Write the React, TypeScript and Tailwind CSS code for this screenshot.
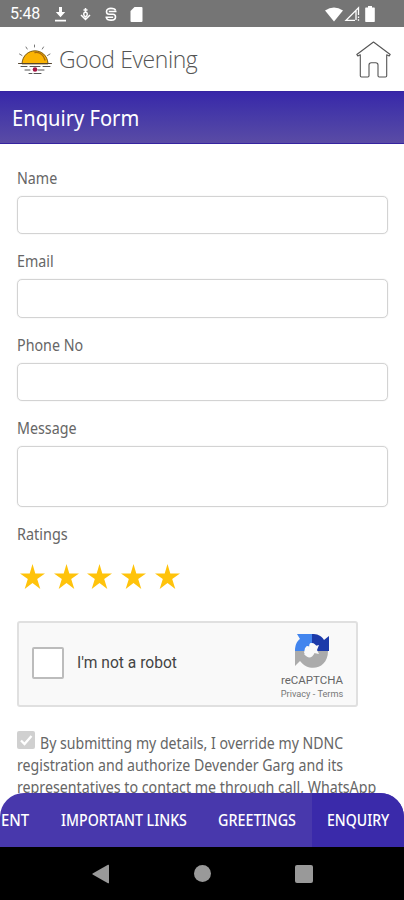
interface FieldProps {
  label: string;
  multiline?: boolean;
}

const ratings = [1, 2, 3, 4, 5];

function StatusBar() {
  return (
    <div className="flex h-[27px] shrink-0 items-center bg-[#757575] pl-[10px] pr-[29px] pt-[1px] text-white">
      <span className="w-[45px] font-['Roboto'] text-[16px] leading-none tracking-[-0.2px]">5:48</span>
      <svg className="h-[15px] w-[11px]" viewBox="0 0 11 15" fill="currentColor">
        <path d="M4 0h3v5h3.2L5.5 10.300 .8 5H4zM0 12.800h11v1.800H0z" />
      </svg>
      <svg
        className="ml-[14px] h-[15px] w-[11px]"
        viewBox="0 0 11 15"
        fill="none"
        stroke="currentColor"
        strokeWidth="1.500"
      >
        <path d="M5.500 1v4M3.500 3h4M4 8.500C2.500 4 8.500 4 7 8.500M1 8l4.500 4.500L10 8M4 8.500l1.500 1.500L7 8.500" />
      </svg>
      <svg
        className="ml-[14px] h-[15px] w-[12px]"
        viewBox="0 0 12 15"
        fill="none"
        stroke="currentColor"
        strokeWidth="1.600"
      >
        <path d="M10.500 3.500C10 1 1.500 0 1.500 4.500c0 1.800 1 2.700 2.500 2.700h4c1.500 0 2.500 1 2.500 2.700 0 4.500-8.500 3.700-9 1M3.800 4.500H11.500M.5 10.200h7.700" />
      </svg>
      <svg className="ml-[13px] h-[15px] w-[13px]" viewBox="0 0 13 15" fill="currentColor">
        <path d="M4.500 0H11.500Q12.500 0 12.500 1V14Q12.500 15 11.500 15H1.500Q.5 15 .5 14V4z" />
      </svg>
      <svg className="ml-auto h-[15px] w-[18px]" viewBox="0 0 18 15" fill="currentColor">
        <path d="M0 3.500Q9-2.500 18 3.500L9 14.500z" />
      </svg>
      <svg className="ml-[1px] h-[16px] w-[16px]" viewBox="0 0 16 16" fill="none" stroke="currentColor">
        <path d="M14.500 9V1.800L2 14.400h9M12 5v9" strokeWidth="1.300" />
        <path d="M14.500 10.500v1.500M14.500 13.300v1.500" strokeWidth="1.300" />
      </svg>
      <svg className="ml-[5px] h-[16px] w-[10px]" viewBox="0 0 10 16" fill="currentColor">
        <path d="M3 0h4v1.500h2.200q.6 0 .6.700v13q0 .8-.6.800H.8q-.6 0-.6-.8v-13q0-.7.600-.700H3z" />
      </svg>
    </div>
  );
}

function SunIcon() {
  return (
    <svg className="mt-[2px] h-[34px] w-[36px]" viewBox="0 0 36 34" fill="none" strokeLinecap="round">
      <path d="M5 20.500C6 3.500 30 3.500 31 20.500z" fill="#fbb403" stroke="#7a5a14" strokeWidth="1" />
      <path d="M18 9.500c5-1 9 3 10 7.500" stroke="#a96a0c" strokeWidth="1.300" />
      <path d="M1.500 20.500h33" stroke="#54452f" strokeWidth="1" />
      <path
        d="M17.500 2v2M9 4l1.200 2M26.500 4l-1.200 2M2.500 11l2.500 1.500M33 11l-2.500 1.500"
        stroke="#777"
        strokeWidth="1"
      />
      <path d="M4 23.500h6M13 23.500h10M26 23.500h7M8 27h5M21 27h6M12 30.500h3M17 30.500h7" stroke="#555" strokeWidth="1" />
      <circle cx="18" cy="26.500" r="2.300" fill="#a51442" />
    </svg>
  );
}

function Header() {
  return (
    <header className="flex h-16 shrink-0 items-center pl-[17px] pr-[13px]">
      <SunIcon />
      <span className="ml-[6px] origin-left scale-x-[0.955] whitespace-nowrap font-['Open_Sans'] text-[24px] font-light leading-none tracking-[-0.4px] text-[#555]">
        Good Evening
      </span>
      <svg
        className="ml-auto h-[37px] w-[35px]"
        viewBox="0 0 35 37"
        fill="none"
        stroke="#555"
        strokeWidth="1.100"
        strokeLinejoin="round"
      >
        <path d="M17.500 1L.8 13.500l1 1.500 2.500-1.200v21q0 1.200 1.200 1.200h6.300q1.200 0 1.200-1.200V24q0-2.300 2.300-2.300h4.400q2.300 0 2.300 2.300v10.800q0 1.200 1.200 1.200h6.300q1.200 0 1.200-1.200v-21l2.500 1.200 1-1.500z" />
      </svg>
    </header>
  );
}

function Field({ label, multiline = false }: FieldProps) {
  return (
    <div className="mb-[17px]">
      <label className="flex h-[28px] items-start text-[15.500px] leading-[21px]">
        <span className="origin-left scale-x-[0.92]">{label}</span>
      </label>
      {multiline ? (
        <div className="h-[61px] rounded-[5px] border-[1.500px] border-[#d3d3d3] shadow-[0_0_1px_#ccc]" />
      ) : (
        <div className="h-[38.300px] rounded-[5px] border-[1.500px] border-[#d3d3d3] shadow-[0_0_1px_#ccc]" />
      )}
    </div>
  );
}

function Captcha() {
  return (
    <div className="flex h-[86px] w-[341px] items-center rounded-[3px] border-2 border-[#e0e0e0] bg-[#f9f9f9] pl-[13px] font-['Roboto']">
      <div className="mt-[-1px] h-8 w-8 rounded-[2px] border-2 border-[#bcbcbc] bg-white" />
      <span className="ml-[13px] whitespace-nowrap text-[15.600px] text-[#444]">I'm not a robot</span>
      <div className="ml-auto mr-[11px] flex w-[66px] flex-col items-center pt-[6px]">
        <svg className="h-[36px] w-[36px]" viewBox="0 0 36 36">
          <path d="M1 18C1 12 3 8 6 6L3 1h15v9c-2 0-3 1-2 4-3-2-5-1-5 4z" fill="#4285ee" />
          <path d="M18 1c5 0 9 1 12 6l5-4v15H20l3-4c-1-2-3-4-5-4z" fill="#1c3aa9" />
          <path d="M1 18h12l-3 3c4 5 8 5 11-2l3-1h10c0 18-19 22-28 10l-5 5z" fill="#ababab" />
          <path d="M11 15l4-1 1-4 5 3 4-1-2 5 2 4-5-1-4 4-2-3-4-1z" fill="#f9f9f9" />
        </svg>
        <span className="mt-[5px] text-[11.500px] leading-[13px] text-[#666]">reCAPTCHA</span>
        <span className="whitespace-nowrap text-[9.200px] leading-[14px] text-[#777]">Privacy - Terms</span>
      </div>
    </div>
  );
}

function BottomTabs() {
  return (
    <nav className="flex h-[54px] shrink-0 items-stretch overflow-hidden whitespace-nowrap rounded-t-[24px] bg-[#4838ac] text-[16px] font-medium text-white">
      <span className="flex w-[45px] items-center pb-[1px] pl-[1px]">
        <span className="origin-left scale-x-[0.93]">ENT</span>
      </span>
      <span className="flex w-[157px] items-center pb-[1px] pl-[16px]">
        <span className="origin-left scale-x-[0.885]">IMPORTANT LINKS</span>
      </span>
      <span className="flex w-[110px] items-center pb-[1px] pl-[16px]">
        <span className="origin-left scale-x-[0.895]">GREETINGS</span>
      </span>
      <span className="flex w-[92px] items-center bg-[#3a2aaa] pb-[1px] pl-[15px]">
        <span className="origin-left scale-x-[0.88]">ENQUIRY</span>
      </span>
    </nav>
  );
}

function SystemNav() {
  return (
    <div className="flex h-[53px] shrink-0 items-center bg-black pl-[92px] text-[#999]">
      <svg className="h-[20px] w-[17px]" viewBox="0 0 17 20" fill="currentColor">
        <path d="M16 .8q1-.5 1 .5v17.400q0 1-1 .5L.6 10.500q-.6-.5 0-1z" />
      </svg>
      <div className="ml-[85px] h-[17px] w-[17px] rounded-full bg-[#999]" />
      <div className="ml-[84px] h-[18px] w-[18px] rounded-[2px] bg-[#999]" />
    </div>
  );
}

export default function App() {
  return (
    <div className="flex h-[900px] w-[404px] flex-col overflow-hidden bg-white font-['Noto_Sans',sans-serif] text-[#666]">
      <StatusBar />
      <Header />
      <h1 className="flex h-[53px] shrink-0 items-center border-y border-[#3524a0] bg-linear-to-b from-[#3826a9] to-[#5a4ba5] pl-3 text-[22px] text-white">
        <span className="origin-left scale-x-[0.915]">Enquiry Form</span>
      </h1>
      <main className="h-[649px] shrink-0 overflow-hidden px-[17px] pt-[24px]">
        <div className="w-[371px]">
          <Field label="Name" />
          <Field label="Email" />
          <Field label="Phone No" />
          <Field label="Message" multiline />
        </div>
        <div className="mt-[-3px] flex h-[28px] items-center text-[15.500px]">
          <span className="origin-left scale-x-[0.93]">Ratings</span>
        </div>
        <div className="mt-[15px] flex gap-[8.700px] pl-[3px]">
          {ratings.map((n) => (
            <svg key={n} className="h-[25px] w-[25px]" viewBox="0 0 25 25" fill="#ffc30b">
              <path d="M12.500 0l2.800 9.500H25l-7.800 5.600L20.300 25l-7.800-6L4.700 25l3.100-9.900L0 9.500h9.700z" />
            </svg>
          ))}
        </div>
        <div className="mt-[32px]">
          <Captcha />
        </div>
        <div className="mt-[25px] whitespace-nowrap text-[15.500px] leading-[22px]">
          <div className="flex items-center">
            <svg className="mt-[-6px] mr-[5px] h-[18px] w-[18px]" viewBox="0 0 18 18" fill="none">
              <rect width="18" height="18" rx="2" fill="#d0d0d0" />
              <path d="M4 9.500l3.500 3.500L14.500 5" stroke="#fff" strokeWidth="2.300" />
            </svg>
            <span className="origin-left scale-x-[0.91]">By submitting my details, I override my NDNC</span>
          </div>
          <div className="origin-left scale-x-[0.913]">registration and authorize Devender Garg and its</div>
          <div className="origin-left scale-x-[0.918]">representatives to contact me through call, WhatsApp</div>
        </div>
      </main>
      <BottomTabs />
      <SystemNav />
    </div>
  );
}
